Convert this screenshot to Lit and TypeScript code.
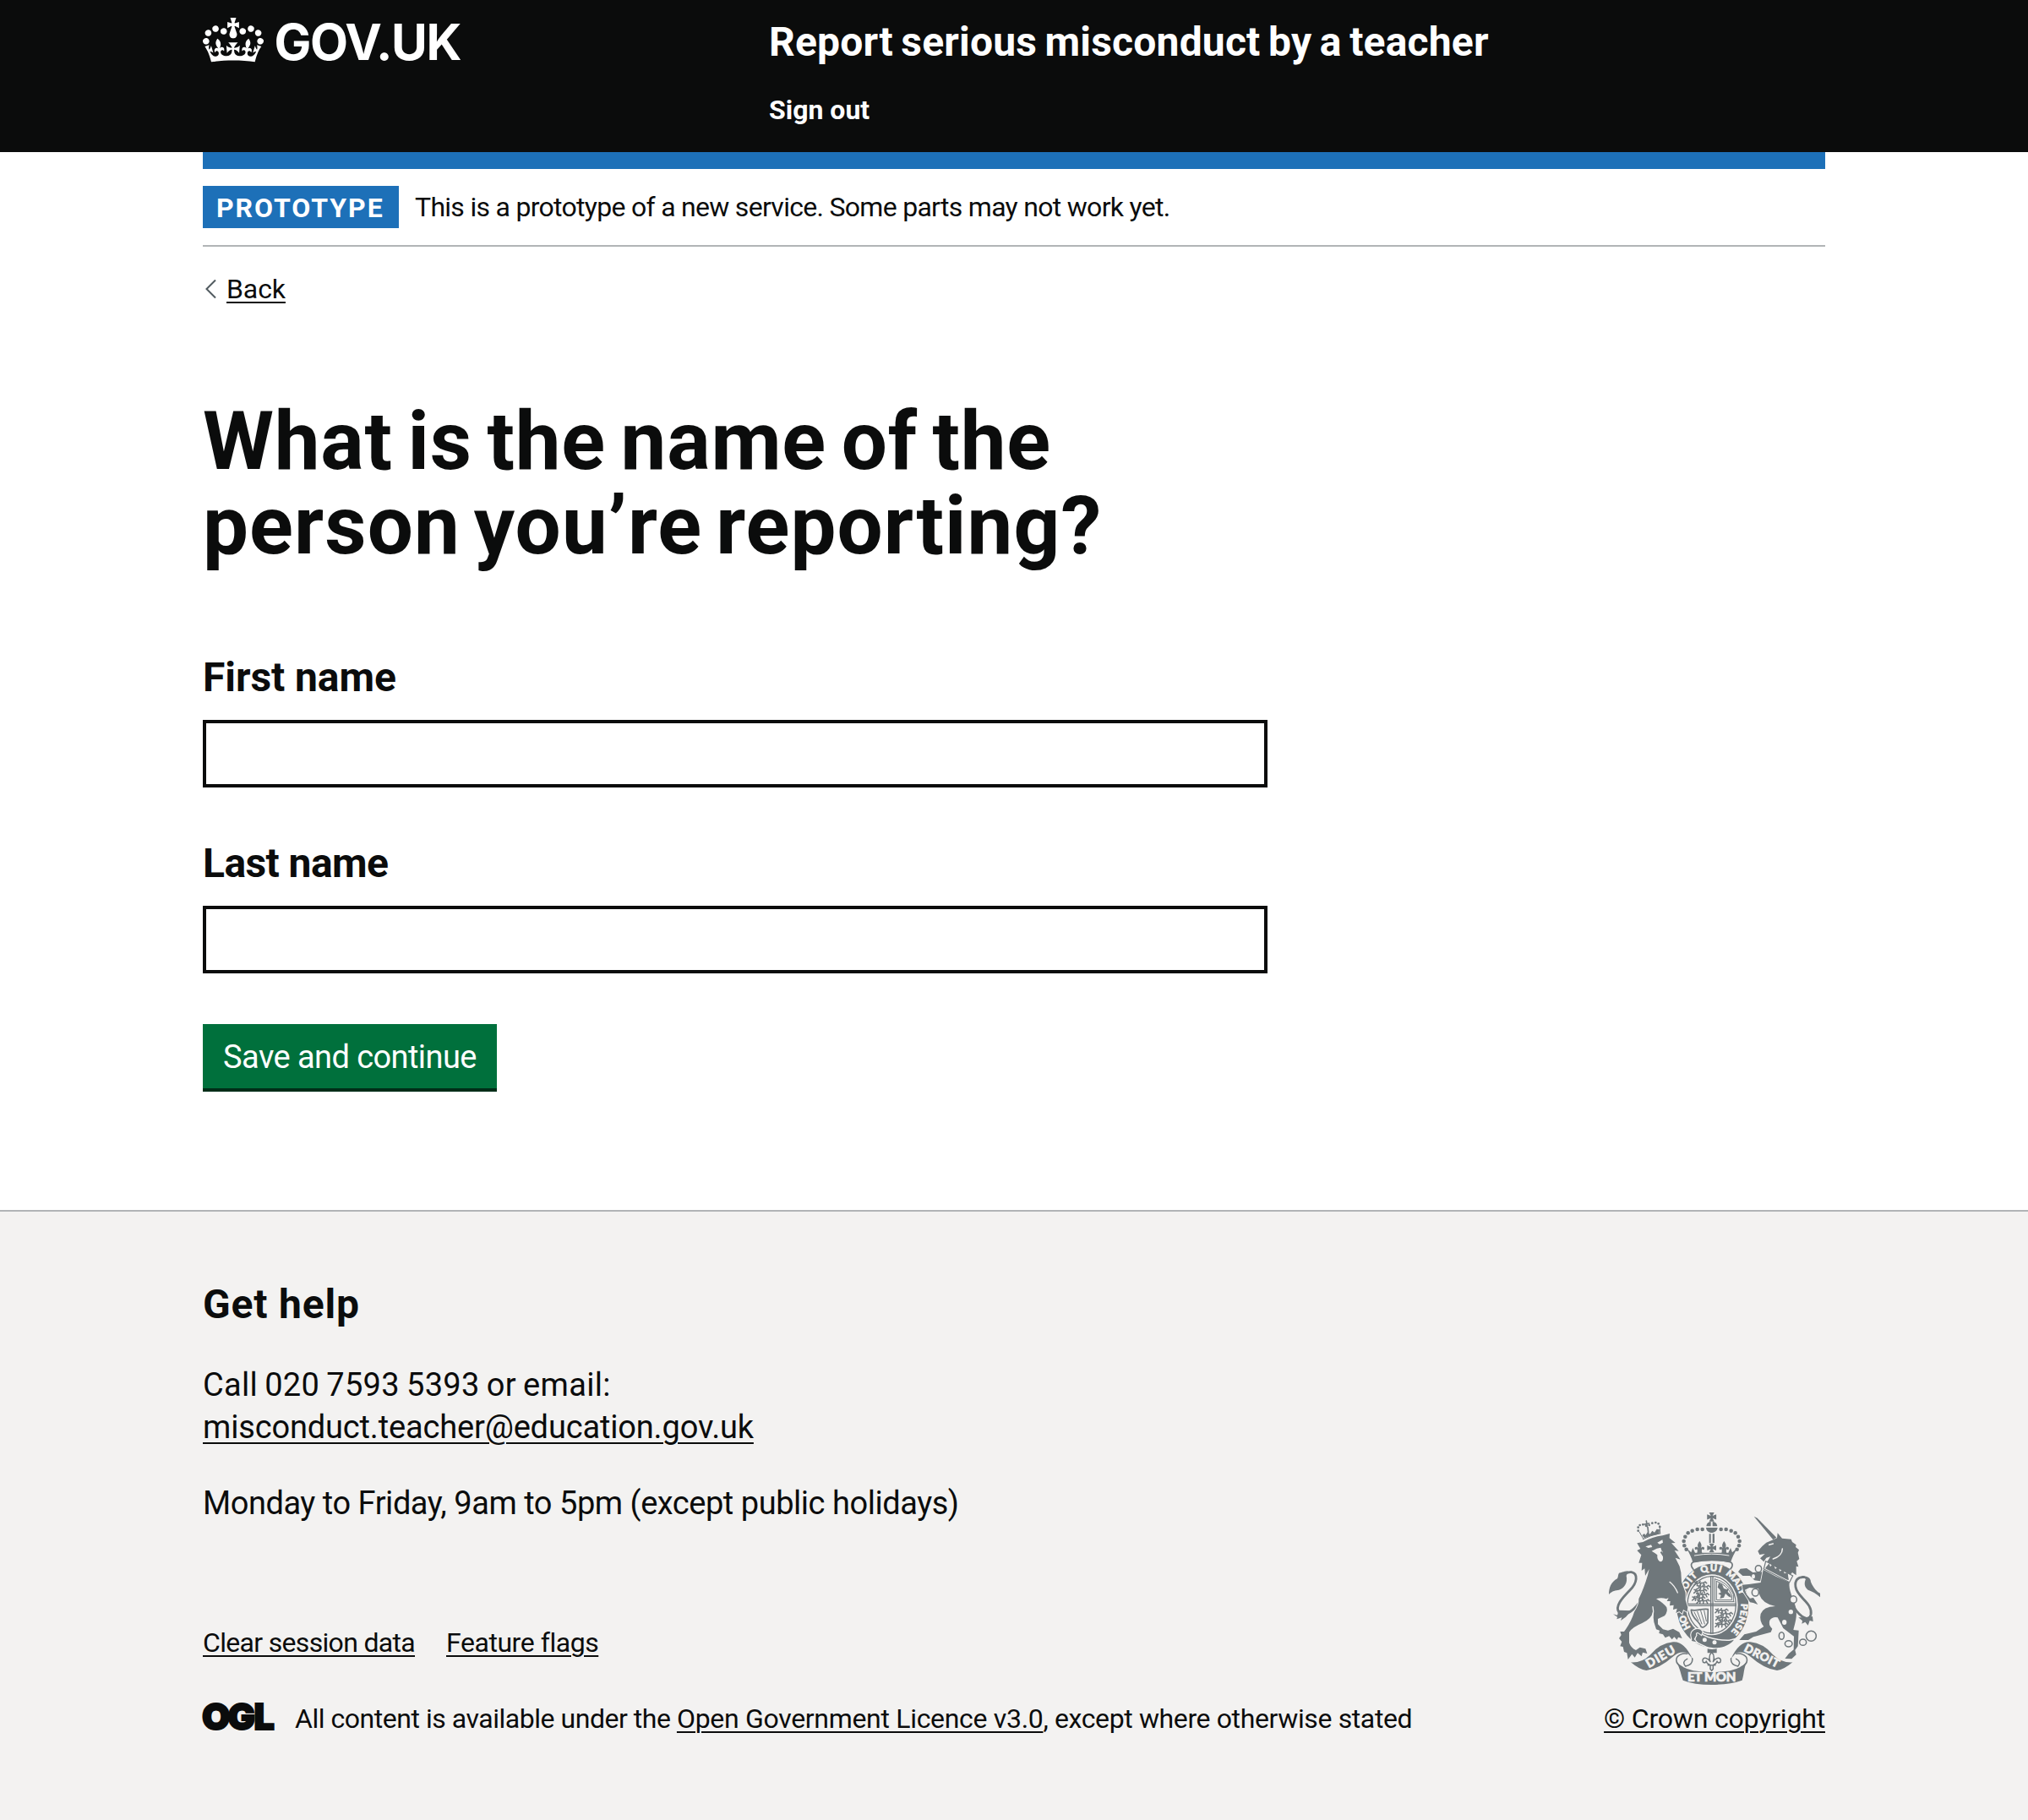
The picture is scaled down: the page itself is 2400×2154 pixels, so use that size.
import { LitElement, html, svg, css } from "lit";
import { customElement, property } from "lit/decorators.js";

const CROWN =
  "M25 30.2c3.5 1.5 7.7-.2 9.1-3.7 1.5-3.6-.2-7.8-3.9-9.2-3.6-1.4-7.6.3-9.1 3.9-1.4 3.5.3 7.5 3.9 9zM9 39.5c3.6 1.5 7.8-.2 9.2-3.7 1.5-3.6-.2-7.8-3.9-9.1-3.6-1.5-7.6.2-9.1 3.8-1.4 3.5.3 7.5 3.8 9zM4.4 57.2c3.5 1.5 7.7-.2 9.1-3.8 1.5-3.6-.2-7.7-3.9-9.1-3.5-1.5-7.6.3-9.1 3.8-1.4 3.5.3 7.6 3.9 9.1zm38.3-21.4c3.5 1.5 7.7-.2 9.1-3.8 1.5-3.6-.2-7.7-3.9-9.1-3.6-1.5-7.6.3-9.1 3.8-1.3 3.6.4 7.7 3.9 9.1zm64.4-5.6c-3.6 1.5-7.8-.2-9.1-3.7-1.5-3.6.2-7.8 3.8-9.2 3.6-1.4 7.7.3 9.2 3.9 1.3 3.5-.4 7.5-3.9 9zm15.9 9.3c-3.6 1.5-7.7-.2-9.1-3.7-1.5-3.6.2-7.8 3.7-9.1 3.6-1.5 7.7.2 9.2 3.8 1.5 3.5-.3 7.5-3.8 9zm4.7 17.7c-3.6 1.5-7.8-.2-9.2-3.8-1.5-3.6.2-7.7 3.9-9.1 3.6-1.5 7.7.3 9.2 3.8 1.3 3.5-.4 7.6-3.9 9.1zM89.3 35.8c-3.6 1.5-7.8-.2-9.2-3.8-1.4-3.6.2-7.7 3.9-9.1 3.6-1.5 7.7.3 9.2 3.8 1.4 3.6-.3 7.7-3.9 9.1zM69.7 17.7l8.9 4.7V9.3l-8.9 2.8c-.2-.3-.5-.6-.9-.9L72.4 0H59.6l3.5 11.2c-.3.3-.6.5-.9.9l-8.8-2.8v13.1l8.8-4.7c.3.3.6.7.9.9l-5 15.4v.1c-.2.8-.4 1.6-.4 2.4 0 4.1 3.1 7.5 7 8.1h.2c.3 0 .7.1 1 .1.4 0 .7 0 1-.1h.2c4-.6 7.1-4.1 7.1-8.1 0-.8-.1-1.7-.4-2.4V34l-5.1-15.4c.4-.2.7-.6 1-.9zM66 92.8c16.9 0 32.8 1.1 47.1 3.2 4-16.9 8.9-26.7 14-33.5l-9.6-3.4c1 4.9 1.1 7.2 0 10.2-1.5-1.4-3-4.3-4.2-8.7L108.6 76c2.8-2 5-3.2 7.5-3.3-4.4 9.4-10 11.9-13.6 11.2-4.3-.8-6.3-4.6-5.6-7.9 1-4.7 5.7-5.9 8-.5 4.3-8.7-3-11.4-7.6-8.8 7.1-7.2 7.9-13.5 2.1-21.1-8 6.1-8.1 12.3-4.5 20.8-4.7-5.4-12.1-2.5-9.5 6.2 3.4-5.2 7.9-2 7.2 3.1-.6 4.3-6.4 7.8-13.5 7.2-10.3-.9-10.9-8-11.2-13.8 2.5-.5 7.1 1.8 11 7.3L80.2 60c-4.1 4.4-8 5.3-12.3 5.4 1.4-4.4 8-11.6 8-11.6H55.5s6.4 7.2 7.9 11.6c-4.2-.1-8-1-12.3-5.4l1.4 16.4c3.9-5.5 8.5-7.7 10.9-7.3-.3 5.8-.9 12.8-11.1 13.8-7.2.6-12.9-2.9-13.5-7.2-.7-5 3.8-8.3 7.1-3.1 2.7-8.7-4.6-11.6-9.4-6.2 3.7-8.5 3.6-14.7-4.6-20.8-5.8 7.6-5 13.9 2.2 21.1-4.7-2.6-11.9.1-7.7 8.8 2.3-5.5 7.1-4.2 8.1.5.7 3.3-1.3 7.1-5.7 7.9-3.5.7-9-1.8-13.5-11.2 2.5.1 4.7 1.3 7.5 3.3l-4.7-15.4c-1.2 4.4-2.7 7.2-4.3 8.7-1.1-3-.9-5.3 0-10.2l-9.5 3.4c5 6.9 9.9 16.7 14 33.5 14.8-2.1 30.8-3.2 47.7-3.2z";

/** Royal coat of arms shown above the copyright link. */
@customElement("royal-arms")
export class RoyalArms extends LitElement {
  static styles = css`
    :host { display: block; width: 250px; height: 204px; }
    svg { display: block; width: 100%; height: 100%; }
    .ink { fill: #6f777b; }
    .gap { fill: #f3f2f1; }
    .line { fill: none; stroke: #6f777b; stroke-linecap: round; stroke-linejoin: round; }
    .cut { fill: none; stroke: #f3f2f1; stroke-linecap: round; stroke-linejoin: round; }
    .halo { fill: #6f777b; stroke: #f3f2f1; paint-order: stroke; }
    .motto {
      fill: #f3f2f1; stroke: #f3f2f1; stroke-width: 2px; letter-spacing: 0;
      font-family: Lato, Roboto, sans-serif; font-weight: 900;
    }
  `;

  private pearls() {
    const left = [
      [404, 120], [386, 120], [368, 125], [353, 133], [343, 146], [338, 162], [340, 178], [347, 191],
    ];
    return left.map(([x, y]) => svg`
      <circle class="ink" cx=${x} cy=${y} r="6.8" />
      <circle class="ink" cx=${874 - x} cy=${y} r="6.8" />`);
  }

  private fleur(x: number, y: number, k: number) {
    return svg`<path class="ink" transform="translate(${x} ${y}) scale(${k})"
      d="M0-22C8-12 8-4 4 3C8-3 18-4 17 5C16 10 10 9 10 5C7 10 7 14 9 20H-9C-7 14-7 10-10 5C-10 9-16 10-17 5C-18-4-8-3-4 3C-8-4-8-12 0-22Z" />`;
  }

  private cross(x: number, y: number, k: number) {
    return svg`<path class="ink" transform="translate(${x} ${y}) scale(${k})"
      d="M-9-16H9L3-4L16-9V9L3 4L9 16H-9L-3 4L-16 9V-9L-3-4Z" />`;
  }

  private beast(x: number, y: number) {
    return svg`<path class="line" stroke-width="4.5" transform="translate(${x} ${y})"
      d="M2 14L8 9V4L3 2M8 8C18 2 26 8 36 5L42 1M36 6L40 14M26 7L25 15M14 8L13 15M42 2L47 6M8 3L12 0M20 5L24-1" />`;
  }

  render() {
    return html`
      <svg viewBox="72 60 750 612" role="img" aria-label="Royal coat of arms">
        <!-- crown -->
        ${this.cross(437, 76, 1.02)}
        <path class="ink" d="M418 109C419 98 427 93 434 92V109ZM440 92C448 93 456 98 457 109H440ZM417 114H458C457 125 448 132 437 132S418 125 417 114Z" />
        <path class="ink" d="M428 136H434V168H428ZM440 136H447V168H440Z" />
        ${this.pearls()}
        ${this.cross(437, 186, 1)}
        ${this.fleur(394, 184, 1)}${this.fleur(481, 184, 1)}
        <path class="ink" d="M347 186L364 202L370 186L378 203H496L504 186L510 202L528 186C517 205 509 222 504 238Q437 224 370 238C366 221 358 205 347 186Z" />
        <path class="cut" stroke-width="3" d="M376 213Q437 202 498 213" />
        <path class="line" stroke-width="5" d="M372 236C362 240 362 252 372 262M503 236C513 240 513 252 503 262M372 236Q437 222 503 236" />

        <!-- garter and shield -->
        <ellipse class="ink" cx="440" cy="391" rx="128" ry="149" />
        <ellipse class="gap" cx="437" cy="388" rx="93" ry="108" />
        <ellipse class="line" stroke-width="4" cx="437" cy="388" rx="86" ry="101" />
        <path class="line" stroke-width="4" d="M434 288V490M441 288V490M352 385H522M352 391H522" />
        ${[[372, 305], [372, 332], [366, 358]].map(([x, y]) => this.beast(x, y))}
        ${[[384, 318], [380, 346], [382, 368]].map(([x, y]) => this.beast(x, y))}
        ${[[448, 402], [450, 428], [448, 452]].map(([x, y]) => this.beast(x, y))}
        ${[[464, 414], [460, 440]].map(([x, y]) => this.beast(x, y))}
        <path class="line" stroke-width="3" d="M448 296V377H516M448 296Q492 306 514 350V377M454 304V371H508V352Q490 316 454 304" />
        <path class="ink" d="M462 310L474 316L480 330L492 334L498 328L494 342L504 352L506 362L496 358L486 348L480 362L466 366L470 354L460 348L470 344L466 334L458 326Z" />
        <path class="line" stroke-width="5" d="M364 406C382 412 402 400 424 404L423 452C416 466 402 472 398 464C394 446 366 438 364 406Z" />
        <path class="line" stroke-width="3" d="M375 414L390 444M386 412L402 456M398 409L412 456M410 408L418 446" />
        <path id="garter" fill="none" d="M440 512A101 122 0 0 1 440 268A101 122 0 0 1 440 512" />
        <text class="motto" font-size="33"><textPath href="#garter" startOffset="92" textLength="50">HO</textPath></text>
        <text class="motto" font-size="33"><textPath href="#garter" startOffset="210" textLength="84">SOIT</textPath></text>
        <text class="motto" font-size="33"><textPath href="#garter" startOffset="311" textLength="70">QUI</textPath></text>
        <text class="motto" font-size="33"><textPath href="#garter" startOffset="398" textLength="92">MALY</textPath></text>
        <text class="motto" font-size="33"><textPath href="#garter" startOffset="520" textLength="108">PENSE</textPath></text>

        <!-- buckle and strap -->
        <path class="halo" stroke-width="9" d="M386 486Q436 518 500 516L516 512C494 540 452 546 420 536Q396 526 378 516Z" />
        <circle class="gap" cx="412" cy="512" r="7.5" /><circle class="gap" cx="447" cy="521" r="7.5" />
        <path class="halo" stroke-width="7" d="M366 486C376 470 396 470 404 484L400 494L392 488C384 482 378 490 382 496L374 510L382 520L366 516C370 506 360 500 366 486Z" />

        <!-- pendant -->
        <path class="ink" d="M422 544Q438 548 455 544V559H422Z" />
        <path class="line" stroke-width="4.5"
          d="M437 556C426 568 428 580 432 590C424 576 408 572 405 584C404 596 416 596 418 588C420 600 428 600 432 602V616L437 622L442 616V602C446 600 454 600 456 588C458 596 470 596 469 584C466 572 450 576 442 590C446 580 448 568 437 556ZM424 602H450" />

        <!-- lion -->
        <g transform="translate(60 45)">
          <path class="line" stroke-width="8.5" d="M120 335C96 368 68 384 48 370C32 350 58 320 86 292C114 264 116 232 92 227C78 225 66 234 58 248" />
          <path class="ink" d="M80 223C62 224 56 230 48 230C44 236 46 242 42 250C20 262 12 282 12 306C24 292 36 292 48 290C66 284 80 266 74 240Z" />
          <path class="ink" d="M27 376L42 380L47 362L92 364L72 386L54 399L58 388L40 394L42 386Z" />
          <path class="halo" stroke-width="6"
            d="M112 124L133 120Q166 102 203 97L228 90L227 106L248 123L234 124L260 152L245 150L266 182L248 176L263 206L268 228L270 262L284 300L284 326L292 352L290 368L276 360L272 374L262 366L250 372L254 356L240 360L242 344L228 346L230 330L218 330L224 318L216 322Q198 316 180 322Q205 336 217 352Q222 368 210 382L186 393L186 412L204 430L222 434L240 428L262 440L272 462L258 458L254 467L244 457L236 466L226 454L212 460L204 448L190 444L192 434L180 430L172 404L168 368Q164 392 130 408Q96 422 84 440L84 478Q90 496 108 504L122 494L142 499L148 516L132 512L128 526L114 514L104 530L94 518L80 537L76 514L66 510L62 492L52 490L58 474L48 462L56 450L52 438L66 438L72 430Q94 396 102 368Q120 342 118 322Q136 286 150 238L155 216L141 240L139 214L128 222L130 194L118 194L127 166L112 150L124 144Z" />
          <path class="cut" stroke-width="4" d="M228 262Q246 276 256 300M168 350Q172 366 168 384" />
          <path class="gap" d="M142 136L162 130L166 138L152 141ZM184 122L202 112L204 122L192 128ZM164 152L182 143L196 140L200 152L204 160L202 152L194 156L204 172Q206 190 194 190Q182 184 184 166L176 160Z" />
          <path class="line" stroke-width="3" d="M133 110Q160 96 194 89M120 84L134 108M192 62L194 90" />
          <path class="ink" d="M130 96L138 90L142 96L150 84L158 92L166 80L174 86L182 74L192 76L190 92Q160 96 138 106Z" />
          ${[[116, 80], [116, 68], [122, 60], [133, 58], [144, 62], [155, 60], [166, 53], [178, 51], [188, 55], [193, 66]].map(
            ([x, y]) => svg`<circle class="ink" cx=${x} cy=${y} r="4" />`,
          )}
          <path class="line" stroke-width="5" d="M145 45L148 66M138 57L155 54M150 68L152 86" />
        </g>

        <!-- unicorn -->
        <g transform="translate(525 45)">
          <path class="ink" d="M62 29L74 35L142 104L130 112Z" />
          <path class="halo" stroke-width="5" d="M94 260L64 256L48 240L22 240L6 226L14 215L36 213L58 228L92 226Z" />
          <path class="halo" stroke-width="5" d="M95 218L140 242L188 263C184 292 202 318 210 350C218 385 206 412 202 432L221 434L218 490L208 504L212 520L196 535L172 534L186 516L203 502L204 455L166 426L146 388Q128 384 118 398Q112 414 127 428L122 440L60 457L42 468L10 468L28 448L70 438L97 420Q80 400 86 375Q95 350 138 348Q92 338 82 308L78 286L46 282L30 290L36 306L48 320L60 318L76 342L60 336L48 334L38 318L24 296L20 272L44 270L86 264Z" />
          <path class="ink" d="M76 152L92 134L106 122L134 110L144 106L146 88L162 107L194 110L198 120L212 130L210 138L222 148L218 158L223 180L214 188L220 208L212 206L212 238L198 228L188 240L104 196L114 182L120 172L106 176L97 190L84 178L101 162L82 165Z" />
          <path class="cut" stroke-width="4.5" d="M163 144C163 160 150 174 130 180M116 130L130 126" />
          <path class="gap" stroke="#6f777b" stroke-width="3.5" d="M104 188L200 240L188 263L97 216Z" />
          <path class="ink" d="M106 208L116 196L120 208L130 196L138 216L148 206L154 224L166 216L170 232L182 228L184 246L186 254L180 254L102 214Z" />
          <path class="line" stroke-width="8.5" d="M204 352C230 392 258 402 264 378C272 336 216 318 210 280C206 256 218 243 240 245" />
          <path class="ink" d="M230 240C250 240 264 246 264 262C272 282 288 300 297 302V316C284 302 268 296 254 290C240 280 240 264 246 252Z" />
          <path class="ink" d="M220 388L246 388L270 384L272 402L260 399L254 416L244 404L232 410L234 400Z" />
          ${[[193, 368, 8, 8], [170, 405, 8, 9], [60, 242, 6, 8]].map(
            ([x, y, rx, ry]) => svg`<ellipse class="gap" cx=${x} cy=${y} rx=${rx} ry=${ry} />`,
          )}
          <ellipse class="gap" cx="202" cy="324" rx="12" ry="13" />
          ${[[78, 215, 11, 12], [67, 299, 12, 13], [202, 324, 12, 13], [160, 453, 9, 13], [185, 481, 13, 11], [236, 476, 12, 11], [265, 454, 18, 18]].map(
            ([x, y, rx, ry]) => svg`<ellipse class="line" stroke-width="4.5" cx=${x} cy=${y} rx=${rx} ry=${ry} />`,
          )}
        </g>

        <!-- motto ribbon -->
        <path class="halo" stroke-width="6" d="M150 592Q190 594 218 566Q254 524 300 520Q338 516 368 578L352 560Q326 550 302 570Q250 616 205 621Q180 618 150 592Z" />
        <path class="halo" stroke-width="6" d="M724 592Q684 594 656 566Q620 524 574 520Q536 516 506 578L522 560Q548 550 572 570Q624 616 669 621Q694 618 724 592Z" />
        <path class="line" stroke-width="4.5" d="M350 562Q328 558 314 574Q304 596 334 610M368 578Q372 600 344 606Q330 590 350 580M524 562Q546 558 560 574Q570 596 540 610M506 578Q502 600 530 606Q544 590 524 580" />
        <path class="ink" d="M311 588Q328 612 372 622Q437 632 502 622Q546 612 563 588C550 612 552 636 545 656Q500 672 437 672Q374 672 335 656C328 636 324 612 311 588Z" />
        <text class="motto" font-size="45" x="351" y="661" textLength="172">ET MON</text>
        <text class="motto" font-size="43" textLength="112" transform="translate(214 613) rotate(-30)">DIEU</text>
        <text class="motto" font-size="41" textLength="134" transform="translate(549 551) rotate(27)">DROIT</text>
      </svg>
    `;
  }
}

/** A bold label above a single-line text box. */
@customElement("text-field")
export class TextField extends LitElement {
  @property() label = "";

  static styles = css`
    :host { display: flex; flex-direction: column; gap: 25px; letter-spacing: var(--label-spacing, 0); }
    label { font-size: 48px; line-height: 50px; font-weight: 700; }
    input {
      box-sizing: border-box; width: 1260px; height: 80px; margin: 0; padding: 10px;
      border: 4px solid #0b0c0c; border-radius: 0; background: #fff; font: inherit; font-size: 38px; outline: none;
    }
  `;

  render() {
    return html`<label for="box">${this.label}</label><input id="box" type="text" />`;
  }
}

@customElement("app-root")
export class AppRoot extends LitElement {
  static styles = css`
    :host {
      display: flex; flex-direction: column; min-height: 2154px; background: #fff; color: #0b0c0c;
      font-family: Roboto, "Liberation Sans", sans-serif; font-size: 32px; line-height: 40px;
      font-kerning: normal;
    }
    .wrap { width: 1920px; margin: 0 auto; box-sizing: border-box; }
    a { color: inherit; text-decoration: underline; text-decoration-thickness: 2px; text-underline-offset: 4px; }
    p, h1, h2 { margin: 0; }

    .header { background: #0b0c0c; color: #fff; height: 180px; }
    .header-row { display: grid; grid-template-columns: 670px 1fr; }
    .logo { display: block; margin-top: 21px; width: 340px; height: 80px; overflow: visible; }
    .logo-word { font-family: Inter, sans-serif; font-weight: 700; font-size: 58.5px; }
    .service { display: flex; flex-direction: column; gap: 35px; padding-top: 25px; font-weight: 700; }
    .service-name { font-size: 48px; line-height: 50px; letter-spacing: 0.18px; word-spacing: -2.6px; }
    .header a { text-decoration: none; }

    .bar { height: 20px; background: #1d70b8; }
    .phase { display: flex; gap: 19px; padding: 20px 0; border-bottom: 2px solid #b1b4b6; line-height: 50px; }
    .tag {
      box-sizing: border-box; width: 232px; padding: 1px 0 0 16px; height: 50px; background: #1d70b8; color: #fff;
      font-weight: 700; letter-spacing: 1.95px;
    }
    .phase-text { letter-spacing: -0.71px; }

    .back { display: flex; align-items: center; gap: 9px; margin-top: 30px; letter-spacing: -0.1px; }
    .chevron { display: block; width: 19px; height: 24px; }

    .title { margin-top: 110px; font-size: 96px; line-height: 100px; font-weight: 700; }
    .title-a { letter-spacing: 0.8px; word-spacing: -7px; }
    .title-b { letter-spacing: 1.1px; word-spacing: -9px; }
    .fields { display: flex; flex-direction: column; gap: 65px; margin-top: 105px; }
    .first { --label-spacing: -0.07px; }
    .last { --label-spacing: -0.58px; }
    .save {
      display: block; box-sizing: border-box; width: 348px; height: 76px; margin: 60px 0 144px; padding: 2px 0 0;
      border: 0; background: #00703c; box-shadow: 0 4px 0 #002d18; color: #fff;
      font: inherit; font-size: 38px; letter-spacing: -0.57px;
    }

    .footer { flex: 1; background: #f3f2f1; border-top: 2px solid #b1b4b6; }
    .footer-row { display: flex; justify-content: space-between; align-items: flex-end; padding-top: 85px; }
    .help-title { font-size: 48px; line-height: 50px; font-weight: 700; letter-spacing: 0.8px; }
    .help { font-size: 38px; line-height: 50px; }
    .contact { margin-top: 45px; }
    .hours { margin-top: 40px; letter-spacing: -0.46px; }
    .phone { letter-spacing: 0.3px; word-spacing: -1.6px; }
    .email { letter-spacing: -0.16px; text-underline-offset: 5px; }
    .links { display: flex; gap: 37px; margin-top: 120px; }
    .clear { letter-spacing: -0.68px; }
    .flags { letter-spacing: -0.45px; }
    .licence { display: flex; gap: 27px; margin-top: 50px; letter-spacing: -0.47px; white-space: nowrap; }
    .open { letter-spacing: -0.31px; }
    .rest { letter-spacing: -0.38px; }
    .ogl { display: block; width: 82px; height: 34px; overflow: visible; }
    .ogl-word {
      font-family: Inter, sans-serif; font-weight: 900; font-size: 43px; letter-spacing: 0;
      fill: #0b0c0c; stroke: #0b0c0c; stroke-width: 2px;
    }
    .crown-copy { display: flex; flex-direction: column; align-items: flex-end; gap: 20px; letter-spacing: -0.18px; }
    .arms { margin-right: 6px; }
  `;

  render() {
    return html`
      <header class="header">
        <div class="wrap header-row">
          <svg class="logo" viewBox="0 0 340 80" role="img" aria-label="GOV.UK">
            <g transform="scale(.5455)"><path fill="#fff" fill-rule="evenodd" d=${CROWN} /></g>
            <text class="logo-word" x="84.5" y="50" textLength="222" fill="#fff">GOV.UK</text>
          </svg>
          <div class="service">
            <a class="service-name" href="#">Report serious misconduct by a teacher</a>
            <a href="#">Sign out</a>
          </div>
        </div>
      </header>

      <div class="wrap">
        <div class="bar"></div>
        <div class="phase">
          <strong class="tag">PROTOTYPE</strong>
          <span class="phase-text">This is a prototype of a new service. Some parts may not work yet.</span>
        </div>
        <div class="back">
          <svg class="chevron" viewBox="0 0 19 24">
            <path d="M15 1.5L4.5 12L15 22.5" fill="none" stroke="#505a5f" stroke-width="2" />
          </svg>
          <a href="#">Back</a>
        </div>
        <main>
          <h1 class="title">
            <span class="title-a">What is the name of the</span><br /><span class="title-b">person you’re reporting?</span>
          </h1>
          <div class="fields">
            <text-field class="first" label="First name"></text-field>
            <text-field class="last" label="Last name"></text-field>
          </div>
          <button class="save" type="button">Save and continue</button>
        </main>
      </div>

      <footer class="footer">
        <div class="wrap footer-row">
          <div>
            <h2 class="help-title">Get help</h2>
            <p class="help contact">
              <span class="phone">Call 020 7593 5393 or email:</span><br /><a class="email" href="#">misconduct.teacher@education.gov.uk</a>
            </p>
            <p class="help hours">Monday to Friday, 9am to 5pm (except public holidays)</p>
            <div class="links"><a class="clear" href="#">Clear session data</a><a class="flags" href="#">Feature flags</a></div>
            <div class="licence">
              <svg class="ogl" viewBox="0 0 82 34" role="img" aria-label="Open Government Licence">
                <text class="ogl-word" y="32.5"><tspan x="-1">O</tspan><tspan x="29.5">G</tspan><tspan x="60.5">L</tspan></text>
              </svg>
              <span>All content is available under the <a class="open" href="#">Open Government Licence v3.0</a><span class="rest">, except where otherwise stated</span></span>
            </div>
          </div>
          <div class="crown-copy">
            <royal-arms class="arms"></royal-arms>
            <a href="#">© Crown copyright</a>
          </div>
        </div>
      </footer>
    `;
  }
}
